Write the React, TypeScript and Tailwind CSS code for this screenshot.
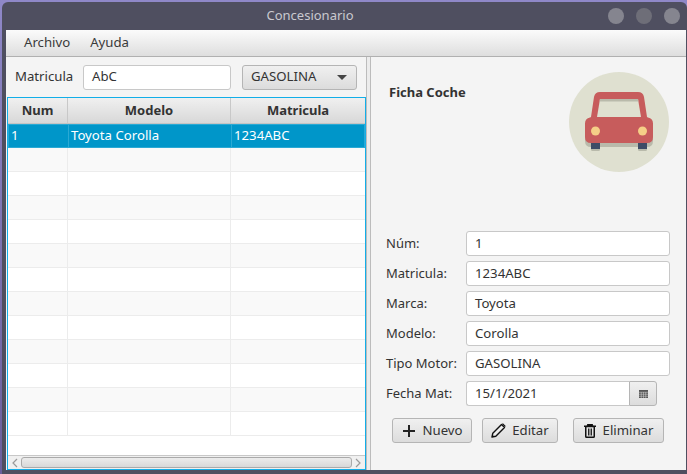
import React from 'react';

const FONT = "font-['Noto_Sans','Open_Sans',sans-serif]";

const FIELDS = [
  { label: 'Núm:', value: '1' },
  { label: 'Matricula:', value: '1234ABC' },
  { label: 'Marca:', value: 'Toyota' },
  { label: 'Modelo:', value: 'Corolla' },
  { label: 'Tipo Motor:', value: 'GASOLINA' },
];

const BODY = 'M31 20h38q5 0 6 5l3 20 1 .5q5 1 5 6V65q0 6-6 6H22q-6 0-6-6V51.500q0-5 5-6l1-.5 3-20q1-5 6-5z';

const CarBadge = () => (
  <svg width="100" height="100" viewBox="0 0 100 100" className="shrink-0">
    <circle cx="50" cy="50" r="50" fill="#dfe0d0" />
    {/* shadow */}
    <path d={BODY} fill="#b9baab" transform="translate(0 4)" />
    <rect x="22" y="72" width="9" height="7" rx="1.500" fill="#b9baab" />
    <rect x="69" y="72" width="9" height="7" rx="1.500" fill="#b9baab" />
    {/* wheels */}
    <rect x="22" y="70" width="9" height="7" fill="#3e4c66" />
    <rect x="69" y="70" width="9" height="7" fill="#3e4c66" />
    {/* body */}
    <path d={BODY} fill="#c75c5c" />
    <path d="M31 27h38l3 18H28z" fill="#dfe0d0" />
    <path d="M31 27h38l.4 2.500H30.600z" fill="#b9baab" />
    <circle cx="26.500" cy="59" r="4.500" fill="#f5cf87" />
    <circle cx="73.500" cy="59" r="4.500" fill="#f5cf87" />
  </svg>
);

const PlusIcon = () => (
  <svg width="12" height="12" viewBox="0 0 12 12" stroke="#222" strokeWidth="2" className="shrink-0">
    <path d="M6 0v12M0 6h12" />
  </svg>
);

const PencilIcon = () => (
  <svg width="15" height="15" viewBox="0 0 15 15" className="shrink-0">
    <path d="M1 14l.8-3.800L10.500 1.500l3 3L4.800 13.200z" fill="#eee" stroke="#111" strokeWidth="1.400" strokeLinejoin="round" />
    <path d="M11 1l3 3 .7-.9-2.800-2.800z" fill="#111" />
    <path d="M1 14l.5-2.200 1.700 1.700z" fill="#111" />
  </svg>
);

const TrashIcon = () => (
  <svg width="12" height="14" viewBox="0 0 12 14" fill="none" stroke="#111" className="shrink-0">
    <path d="M0 2.250h12M3.750 2V.750h4.500V2" strokeWidth="1.300" />
    <rect x="1.750" y="2.500" width="8.500" height="10.750" rx=".8" strokeWidth="1.500" />
    <path d="M4.750 4.500v7M7.250 4.500v7" strokeWidth="1.300" />
  </svg>
);

const CalendarIcon = () => (
  <svg width="9" height="8" viewBox="0 0 9 8" className="shrink-0">
    <rect width="9" height="8" fill="#555" />
    <path d="M0 2.250h9M0 4.250h9M0 6.250h9M2.250 2v6M4.500 2v6M6.750 2v6" stroke="#d8d8d8" strokeWidth=".5" />
  </svg>
);

const TextBox = ({ value, className }: { value: string; className: string }) => (
  <div className={`h-[25px] flex items-center bg-white border border-[#c8c8c8] rounded-[3px] px-2 text-[13.2px] text-[#333] ${className}`}>
    {value}
  </div>
);

const FxButton = ({ className, children }: { className: string; children: React.ReactNode }) => (
  <div className={`h-[25px] flex items-center justify-center border border-[#b5b5b5] rounded-[3px] bg-gradient-to-b from-[#f0f0f0] to-[#dcdcdc] text-[13.2px] text-[#333] ${className}`}>
    {children}
  </div>
);

const Cell = ({ className, children }: { className: string; children?: React.ReactNode }) => (
  <div className={`h-full flex items-center px-[2px] border-r ${className}`}>{children}</div>
);

const COL1 = 'w-[60px] shrink-0';
const COL2 = 'w-[163px] shrink-0';

export default function App() {
  const rows = Array.from({ length: 12 });

  return (
    <div className={`w-[687px] h-[474px] overflow-hidden bg-gradient-to-b from-[#8f88c8] to-[#6a5f9c] pt-[2px] pl-[2px] ${FONT}`}>
      <div className="w-[685px] h-[472px] rounded-t-[6px] bg-[#4f4f60] pl-[4px] pr-[1px] pb-[4px] flex flex-col">
        {/* title bar */}
        <div className="h-[28px] shrink-0 relative flex items-center justify-center text-[13px] text-[#c9c9cf] -ml-[4px] pr-[68px]">
          Concesionario
          <div className="absolute right-[6px] top-[6px] flex gap-[12px]">
            <div className="w-4 h-4 rounded-full bg-[#85858f]" />
            <div className="w-4 h-4 rounded-full bg-[#6e6e78]" />
            <div className="w-4 h-4 rounded-full bg-[#85858f]" />
          </div>
        </div>

        {/* menu bar */}
        <div className="h-[27px] shrink-0 flex items-center gap-[20px] pl-[18px] bg-gradient-to-b from-[#fbfbfb] to-[#dedede] border-b border-[#b0b0b0] text-[13.2px] text-[#3a3a3a]">
          <span>Archivo</span>
          <span>Ayuda</span>
        </div>

        <div className="flex-1 flex min-h-0 bg-[#f4f4f4]">
          {/* left pane */}
          <div className="w-[360px] shrink-0 flex flex-col pl-[1px]">
            <div className="h-[40px] shrink-0 flex items-center pl-[8px] text-[13.2px] text-[#333]">
              <span className="w-[68px]">Matricula</span>
              <TextBox value="AbC" className="w-[148px]" />
              <FxButton className="w-[115px] ml-[11px] !justify-between px-2">
                <span>GASOLINA</span>
                <span className="w-0 h-0 mr-[1px] border-l-[5px] border-r-[5px] border-t-[5px] border-l-transparent border-r-transparent border-t-[#444]" />
              </FxButton>
            </div>

            {/* table with focus outline */}
            <div className="flex-1 min-h-0 flex flex-col p-px bg-[#12aee8]">
              <div className="flex-1 min-h-0 flex flex-col bg-white overflow-hidden">
                <div className="h-[26px] shrink-0 flex bg-gradient-to-b from-[#f0f0f0] to-[#d8d8d8] border-b border-[#c4c4c4] text-[13px] font-bold text-[#333]">
                  <div className={`${COL1} flex items-center justify-center border-r border-[#c8c8c8]`}>Num</div>
                  <div className={`${COL2} flex items-center justify-center border-r border-[#c8c8c8]`}>Modelo</div>
                  <div className="flex-1 flex items-center justify-center">Matricula</div>
                </div>
                <div className="h-[24px] shrink-0 flex bg-[#0096c9] text-[13.2px] text-white border border-[#2aa9d4]">
                  <Cell className={`${COL1} border-[#2aa9d4]`}>1</Cell>
                  <Cell className={`${COL2} border-[#2aa9d4]`}>Toyota Corolla</Cell>
                  <div className="flex-1 flex items-center px-[2px]">1234ABC</div>
                </div>
                <div className="flex-1 min-h-0 overflow-hidden">
                  {rows.map((_, i) => (
                    <div key={i} className={`h-[24px] flex border-b border-[#ececec] ${i % 2 === 0 ? 'bg-[#f9f9f9]' : 'bg-white'}`}>
                      <Cell className={`${COL1} border-[#ececec]`} />
                      <Cell className={`${COL2} border-[#ececec]`} />
                    </div>
                  ))}
                </div>
                <div className="h-[14px] shrink-0 flex items-center gap-[2px] px-[3px] bg-[#f0f0f0] border-t border-[#c8c8c8]">
                  <svg width="8" height="10" viewBox="0 0 8 10" className="shrink-0" fill="none" stroke="#9a9a9a" strokeWidth="1.200"><path d="M6 1 2 5l4 4" /></svg>
                  <div className="flex-1 h-[11px] rounded-[3px] border border-[#aaa] bg-gradient-to-b from-[#ececec] to-[#d8d8d8]" />
                  <svg width="8" height="10" viewBox="0 0 8 10" className="shrink-0" fill="none" stroke="#9a9a9a" strokeWidth="1.200"><path d="m2 1 4 4-4 4" /></svg>
                </div>
              </div>
            </div>
          </div>

          {/* divider */}
          <div className="w-[5px] shrink-0 bg-[#ececec] border-x border-[#bcbcbc]" />

          {/* right pane */}
          <div className="flex-1 min-w-0 flex flex-col pt-[15px] pl-[15px] pr-[16px]">
            <div className="h-[100px] shrink-0 flex items-start justify-between pl-[3px] pr-[1px]">
              <span className="mt-[11px] text-[13px] leading-[18px] font-bold text-[#333]">Ficha Coche</span>
              <CarBadge />
            </div>

            <div className="mt-[59px] flex flex-col gap-[5px] text-[13px] text-[#333]">
              {FIELDS.map((f) => (
                <div key={f.label} className="flex items-center">
                  <span className="w-[80px] shrink-0">{f.label}</span>
                  <TextBox value={f.value} className="w-[204px]" />
                </div>
              ))}
              <div className="flex items-center">
                <span className="w-[80px] shrink-0">Fecha Mat:</span>
                <TextBox value="15/1/2021" className="w-[163px] rounded-r-none border-r-0" />
                <FxButton className="w-[28px] rounded-l-none">
                  <CalendarIcon />
                </FxButton>
              </div>
            </div>

            <div className="mt-[12px] pl-[6px] flex">
              <FxButton className="w-[80px] gap-[7px] pl-[2px]">
                <PlusIcon />
                Nuevo
              </FxButton>
              <FxButton className="w-[76px] ml-[10px] gap-[6px]">
                <PencilIcon />
                Editar
              </FxButton>
              <FxButton className="w-[91px] ml-[15px] gap-[7px]">
                <TrashIcon />
                Eliminar
              </FxButton>
            </div>
          </div>
        </div>
      </div>
    </div>
  );
}
